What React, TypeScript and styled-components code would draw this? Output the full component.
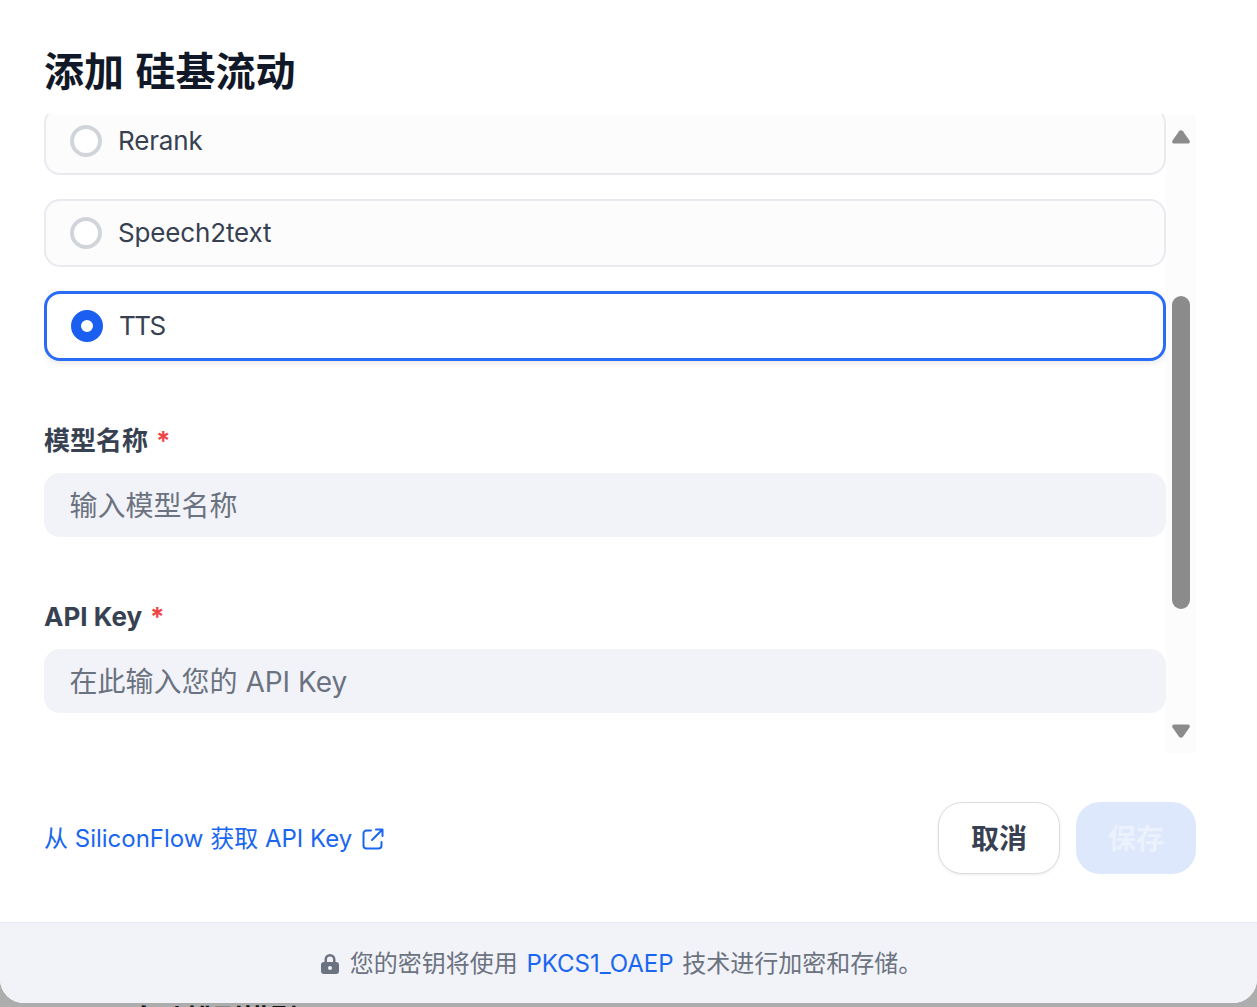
import React from "react";
import styled, { createGlobalStyle } from "styled-components";

const FONT = `Inter, "Noto Sans CJK SC", sans-serif`;

const Global = createGlobalStyle`
  html, body { margin: 0; padding: 0; height: 100%; }
  body {
    background: #adadad;
    font-family: ${FONT};
    overflow: hidden;
  }
  * { box-sizing: border-box; }
`;

const Page = styled.div`
  width: 1257px;
  height: 1007px;
  background: #adadad;
  overflow: hidden;
`;

const Modal = styled.div`
  width: 1257px;
  height: 1003px;
  background: #fff;
  border-radius: 0 0 24px 24px;
  overflow: hidden;
  display: flex;
  flex-direction: column;
`;

const BehindText = styled.div`
  padding-left: 130px;
  margin-top: -1px;
  font-size: 28px;
  line-height: 36px;
  font-weight: 700;
  color: #111;
`;

const Body = styled.div`
  flex: 1;
  padding: 44px 61px 0 44px;
  display: flex;
  flex-direction: column;
`;

const Title = styled.h2`
  margin: 0 0 16px;
  height: 54px;
  font-size: 40px;
  line-height: 56px;
  word-spacing: 2px;
  font-weight: 700;
  color: #111827;
`;

const ScrollArea = styled.div`
  display: flex;
  height: 639px;
  width: 1152px;
  overflow: hidden;
  background: #fff;
`;

const Content = styled.div`
  width: 1122px;
  flex: none;
  margin-top: -7px;
`;

const OptionList = styled.div`
  display: flex;
  flex-direction: column;
  gap: 24px;
`;

const Option = styled.div<{ $selected?: boolean }>`
  height: ${(p) => (p.$selected ? "70px" : "68px")};
  display: flex;
  align-items: center;
  gap: 16px;
  padding-left: 24px;
  border: ${(p) => (p.$selected ? "3px solid #2b6cf6" : "2px solid #e9eaf0")};
  border-radius: 16px;
  background: ${(p) => (p.$selected ? "#fff" : "#fcfcfd")};
  box-shadow: ${(p) => (p.$selected ? "0 2px 6px rgba(0,0,0,.1)" : "none")};
  font-size: 26px;
  line-height: 36px;
  letter-spacing: ${(p) => (p.$selected ? "-1.5px" : "-0.15px")};
  color: #374151;
`;

const Radio = styled.span<{ $selected?: boolean }>`
  width: 32px;
  height: 32px;
  flex: none;
  border-radius: 50%;
  border: ${(p) => (p.$selected ? "10px solid #1a5ff0" : "4px solid #d1d5db")};
  background: #fff;
`;

const Field = styled.div<{ $top: number }>`
  margin-top: ${(p) => p.$top}px;
`;

const Label = styled.label`
  display: block;
  height: 36px;
  margin-bottom: 14px;
  font-size: 26px;
  line-height: 36px;
  font-weight: 700;
  color: #374151;
`;

const Star = styled.span`
  margin-left: 8px;
  color: #ef4444;
`;

const Input = styled.div`
  height: 64px;
  padding-left: 25.5px;
  border-radius: 16px;
  background: #f2f3f8;
  font-size: 28px;
  line-height: 66px;
  color: #6b7280;
`;

const ScrollTrack = styled.div`
  width: 30px;
  flex: none;
  background: #fcfcfc;
  display: flex;
  flex-direction: column;
  align-items: center;
  padding-top: 16px;
`;

const Arrow = styled.svg`
  display: block;
  width: 18px;
  height: 14px;
  flex: none;
  fill: #8b8b8b;
`;

const Thumb = styled.div`
  width: 18px;
  height: 313px;
  margin: 152px 0 115px;
  flex: none;
  border-radius: 9px;
  background: #8b8b8b;
`;

const Actions = styled.div`
  width: 1152px;
  margin-top: 49px;
  height: 72px;
  display: flex;
  align-items: center;
  justify-content: space-between;
`;

const SourceLink = styled.a`
  display: flex;
  align-items: center;
  gap: 10px;
  font-size: 24px;
  line-height: 34px;
  padding-top: 1px;
  color: #1a66f0;
`;

const LinkIcon = styled.svg`
  width: 22px;
  height: 22px;
  flex: none;
  fill: none;
  stroke: #1a66f0;
  stroke-width: 2;
  stroke-linecap: round;
  stroke-linejoin: round;
`;

const ButtonRow = styled.div`
  display: flex;
  gap: 16px;
`;

const CancelButton = styled.button`
  width: 122px;
  height: 72px;
  border: 1px solid #dcdcdc;
  border-radius: 24px;
  background: #fff;
  box-shadow: 0 1px 3px rgba(0,0,0,.08);
  font: 700 28px ${FONT};
  color: #374151;
  padding: 0 0 2px;
`;

const SaveButton = styled.button`
  width: 120px;
  height: 72px;
  border: none;
  border-radius: 24px;
  background: #dde8fc;
  font: 700 28px ${FONT};
  color: #ecf2fd;
  padding: 0 0 2px;
`;

const Footer = styled.div`
  height: 81px;
  flex: none;
  padding: 2px 14px 0 0;
  border-top: 1px solid #e8e9ee;
  background: #f2f3f8;
  display: flex;
  align-items: center;
  justify-content: center;
  gap: 11px;
  font-size: 24px;
  line-height: 32px;
  word-spacing: 2px;
  color: #6b7280;
`;

const LockIcon = styled.svg`
  width: 18px;
  height: 20px;
  flex: none;
  fill: #6b7280;
`;

const Accent = styled.span`
  color: #1a66f0;
`;

export default function App() {
  return (
    <Page>
      <Global />
      <Modal>
        <Body>
          <Title>添加 硅基流动</Title>
          <ScrollArea>
            <Content>
              <OptionList>
                <Option><Radio />Rerank</Option>
                <Option><Radio />Speech2text</Option>
                <Option $selected><Radio $selected />TTS</Option>
              </OptionList>
              <Field $top={62}>
                <Label>模型名称<Star>*</Star></Label>
                <Input>输入模型名称</Input>
              </Field>
              <Field $top={62}>
                <Label>API Key<Star>*</Star></Label>
                <Input>在此输入您的 API Key</Input>
              </Field>
            </Content>
            <ScrollTrack>
              <Arrow viewBox="0 0 18 14"><path d="M7 1.2 Q9 -.6 11 1.2 L17.5 10.5 Q18.6 13.6 16 13.6 H2 Q-.6 13.6 .5 10.5 Z" /></Arrow>
              <Thumb />
              <Arrow viewBox="0 0 18 14"><path d="M7 12.8 Q9 14.6 11 12.8 L17.5 3.5 Q18.6 .4 16 .4 H2 Q-.6 .4 .5 3.5 Z" /></Arrow>
            </ScrollTrack>
          </ScrollArea>
          <Actions>
            <SourceLink>
              从 SiliconFlow 获取 API Key
              <LinkIcon viewBox="0 0 22 22">
                <path d="M9 2.5H4.500a3 3 0 0 0-3 3v12a3 3 0 0 0 3 3h12a3 3 0 0 0 3-3V14" />
                <path d="M14 1.500h6.500V8M20.500 1.500L10 12" />
              </LinkIcon>
            </SourceLink>
            <ButtonRow>
              <CancelButton>取消</CancelButton>
              <SaveButton>保存</SaveButton>
            </ButtonRow>
          </Actions>
        </Body>
        <Footer>
          <LockIcon viewBox="0 0 18 20">
            <path fillRule="evenodd" d="M9 0a5.500 5.500 0 0 0-5.500 5.500V8H3a3 3 0 0 0-3 3v6a3 3 0 0 0 3 3h12a3 3 0 0 0 3-3v-6a3 3 0 0 0-3-3h-.5V5.500A5.500 5.500 0 0 0 9 0zM12 8H6V5.500a3 3 0 0 1 6 0zM9 12a2 2 0 1 1 0 4 2 2 0 0 1 0-4z" />
          </LockIcon>
          <span>您的密钥将使用 <Accent>PKCS1_OAEP</Accent> 技术进行加密和存储。</span>
        </Footer>
      </Modal>
      <BehindText>自动排列模型</BehindText>
    </Page>
  );
}
